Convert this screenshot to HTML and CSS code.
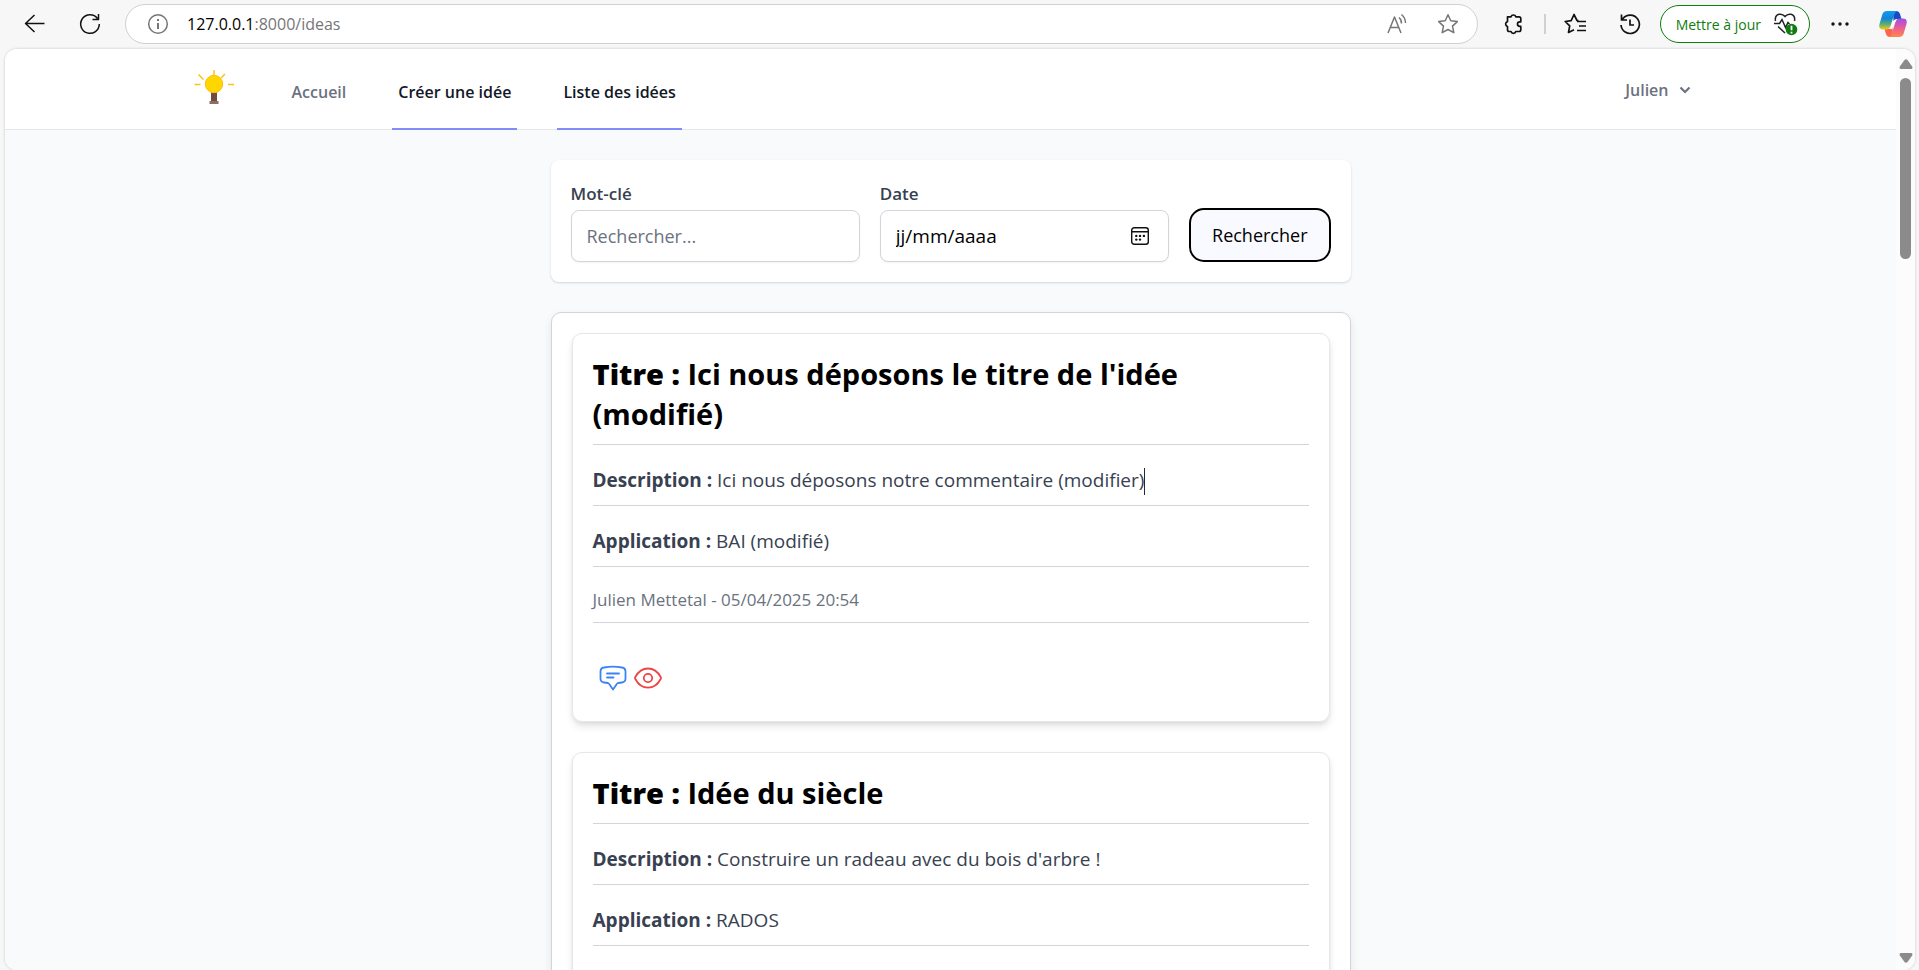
FILE: index.html
```html
<!DOCTYPE html>
<html lang="fr">
<head>
<meta charset="utf-8">
<title>Liste des idées</title>
<link rel="stylesheet" href="styles.css">
</head>
<body>
<div class="browser">
  <header class="toolbar">
    <button class="tool" type="button" aria-label="Retour">
      <svg class="glyph" width="22" height="22" viewBox="0 0 22 22"><path d="M20.500 10.500H1.500M10.500 2L1.500 10.500l9 8.500"/></svg>
    </button>
    <button class="tool" type="button" aria-label="Actualiser">
      <svg class="glyph" width="22" height="22" viewBox="0 0 22 22"><path d="M20.300 11A9.300 9.300 0 1 1 18.500 5.500M19.500 1v5.500h-6"/></svg>
    </button>
    <div class="address">
      <svg class="glyph grey" width="22" height="22" viewBox="0 0 22 22"><circle cx="11" cy="11" r="9.300"/><path d="M11 10v6M11 6v2" stroke-width="2"/></svg>
      <span class="url"><b class="host">127.0.0.1</b>:8000/ideas</span>
      <button class="tool" type="button" aria-label="Lecture à voix haute">
        <svg class="glyph grey" width="24" height="24" viewBox="0 0 24 24"><path d="M3 21L9.500 5 16 21M5.200 15.500h8.600M14 5.500q2.500 2 2.500 6M16.500 2.500q4 3.500 4 8.500"/></svg>
      </button>
      <button class="tool" type="button" aria-label="Favori">
        <svg class="glyph grey" width="22" height="22" viewBox="0 0 22 22"><path d="M11 1.800l2.800 6 6.500.8-4.800 4.500 1.300 6.600L11 16.500l-5.800 3.200 1.300-6.600L1.700 8.600l6.500-.8z"/></svg>
      </button>
    </div>
    <div class="tools">
      <button class="tool" type="button" aria-label="Extensions">
        <svg class="glyph thick" width="22" height="22" viewBox="0 0 22 22"><path d="M4.500 3.800H8a2.500 2.500 0 0 1 4.800 0H16q1.800 0 1.800 1.700v3.300h-1a2.300 2.300 0 0 0 0 4.600h1v3.400q0 1.700-1.800 1.700h-3.200a2.500 2.500 0 0 1-4.800 0H6.300q-1.800 0-1.800-1.700v-3.200a2.600 2.600 0 0 1 0-5z"/></svg>
      </button>
      <span class="rule"></span>
      <button class="tool" type="button" aria-label="Favoris">
        <svg class="glyph thick" width="24" height="22" viewBox="0 0 24 22"><path d="M14.500 7.500L13 7.500 10 1.500 7.200 7.700l-6 .8 4.500 4.300L4.500 19.500 10 16.700M13 8.500h9M15 13h7M13 17.500h9"/></svg>
      </button>
      <button class="tool" type="button" aria-label="Historique">
        <svg class="glyph thick" width="22" height="22" viewBox="0 0 22 22"><path d="M2 12A9.200 9.200 0 1 0 4 5.500L2.500 7M2.500 1.500V7H8M11 6.500V12h4"/></svg>
      </button>
      <button class="update" type="button">Mettre à jour
        <svg width="25" height="24" viewBox="0 0 25 24" fill="none" stroke="#222" stroke-width="1.500"><path d="M2.500 9Q1.500 3.500 6 2.300q3.500-.8 6 2.200 2.500-3 6-2.200 4.500 1.200 3.500 6.700M1 11.500h5.500L9 7.500l3.500 8 2.500-5 1.500 1.500M5 14.500l7 6.500"/><circle cx="18.500" cy="17.500" r="5.800" fill="#107c10" stroke="none"/><path d="M18.500 13.800v4.500M18.500 19.800v1.800" stroke="#fff" stroke-width="1.800"/></svg>
      </button>
      <button class="tool" type="button" aria-label="Paramètres">
        <svg width="20" height="20" viewBox="0 0 20 20" fill="#111"><circle cx="3" cy="10" r="1.700"/><circle cx="10" cy="10" r="1.700"/><circle cx="17" cy="10" r="1.700"/></svg>
      </button>
      <button class="tool copilot" type="button" aria-label="Copilot">
        <svg width="28" height="28" viewBox="0 0 28 28">
          <defs>
            <linearGradient id="cool" x1="0" y1="0" x2="0" y2="1"><stop offset="0" stop-color="#0f9cf0"/><stop offset=".4" stop-color="#1483d8"/><stop offset=".7" stop-color="#55ae78"/><stop offset="1" stop-color="#f5c916"/></linearGradient>
            <linearGradient id="warm" x1="0" y1="0" x2="0" y2="1"><stop offset="0" stop-color="#9a50e8"/><stop offset=".5" stop-color="#eb5b98"/><stop offset="1" stop-color="#ff8748"/></linearGradient>
          </defs>
          <path fill="#174bc5" d="M14 1h3q3 0 4 3l1.500 5h-5q-2 0-3 2z"/>
          <path fill="#fb6550" d="M14 27h-3q-3 0-4-3l-1.500-5h5q2 0 3-2z"/>
          <path fill="url(#cool)" d="M8 1h10q-2 1-3 4l-3.500 11q-1 3.500-4 3.500H4Q-.8 19.500.5 14L3.500 4Q4.500 1 8 1z"/>
          <path fill="url(#warm)" d="M20 27H10q2-1 3-4l3.500-11q1-3.500 4-3.500H24q4.800 0 3.500 5.500l-3 10q-1 3-4.500 3z"/>
          <path fill="#fff" d="M15.500 10h2q-1.500 1-2.300 3.500L13 19h-2q1.200-1 2-3.500z"/>
        </svg>
      </button>
    </div>
  </header>

  <div class="viewport">
    <div class="page">
      <nav class="nav">
        <div class="nav-inner">
          <a class="logo" href="#" aria-label="Accueil">
            <svg width="40" height="36" viewBox="0 0 40 36"><g stroke="#fcc419" stroke-width="1.500"><path d="M20 0v6M4.500 4.500l5 5M31 4l-4 4M.500 14.500h6M34 14.500h6"/></g><path fill="#6d4c41" d="M17 22h6v9h-6z"/><path fill="#8d6e63" d="M15.500 31h9v3h-9z"/><circle cx="20" cy="14" r="8.700" fill="#ffd600" stroke="#fcc010"/></svg>
          </a>
          <a class="link muted" href="#">Accueil</a>
          <a class="link active" href="#">Créer une idée</a>
          <a class="link active" href="#">Liste des idées</a>
          <button class="user" type="button">Julien
            <svg width="12" height="8" viewBox="0 0 12 8" fill="none" stroke="#6b7280" stroke-width="2.200"><path d="M1.500 1.500L6 6l4.500-4.500"/></svg>
          </button>
        </div>
      </nav>

      <main class="content">
        <form class="search">
          <div class="field">
            <label for="keyword">Mot-clé</label>
            <input class="box" id="keyword" type="text" placeholder="Rechercher...">
          </div>
          <div class="field">
            <label for="date">Date</label>
            <div class="box date">
              <input id="date" type="text" placeholder="jj/mm/aaaa">
              <button class="tool" type="button" aria-label="Ouvrir le calendrier">
                <svg width="18" height="18" viewBox="0 0 18 18" fill="none" stroke="#111" stroke-width="1.400"><rect x=".7" y=".7" width="16.600" height="16.600" rx="2.500"/><path d="M1 4.700h16"/><g fill="#111" stroke="none"><circle cx="5.300" cy="12.600" r="1.200"/><circle cx="9" cy="12.600" r="1.200"/><circle cx="5.300" cy="8.900" r="1.200"/><circle cx="9" cy="8.900" r="1.200"/><circle cx="12.900" cy="8.900" r="1.200"/></g></svg>
              </button>
            </div>
          </div>
          <button class="submit" type="submit">Rechercher</button>
        </form>

        <section class="list">
          <article class="idea">
            <h2 class="title"><strong>Titre :</strong> Ici nous déposons le titre de l'idée (modifié)</h2>
            <p class="row"><strong>Description :</strong> Ici nous déposons notre commentaire (modifier)<span class="caret"></span></p>
            <p class="row"><strong>Application :</strong> BAI (modifié)</p>
            <p class="row meta">Julien Mettetal - 05/04/2025 20:54</p>
            <div class="actions">
              <a href="#" class="comment" aria-label="Commenter"><svg width="28" height="26" viewBox="0 0 28 26"><path d="M5 2.500q9-1.600 18 0 3.500.5 3.500 4v7q0 3.500-3.500 4l-4 .5q-1 .3-1.500 1.500L14 24.500 10.500 19.500Q10 18.300 9 18l-4-.5q-3.500-.5-3.500-4v-7q0-3.500 3.500-4zM8 8.500h12M8 12.500h6.500"/></svg></a>
              <a href="#" class="view" aria-label="Voir"><svg width="28" height="26" viewBox="0 0 28 26"><path d="M1.300 14Q.7 13 1.300 12 6 3.500 14 3.500T26.700 12q.6 1 0 2Q22 22.700 14 22.700T1.300 14z"/><circle cx="14" cy="13" r="4.200"/></svg></a>
            </div>
          </article>
          <article class="idea">
            <h2 class="title"><strong>Titre :</strong> Idée du siècle</h2>
            <p class="row"><strong>Description :</strong> Construire un radeau avec du bois d'arbre !</p>
            <p class="row"><strong>Application :</strong> RADOS</p>
            <div class="actions"></div>
          </article>
        </section>
      </main>
    </div>
    <div class="scrollbar">
      <svg width="14" height="10" viewBox="0 0 14 10" fill="#8b8b8b"><path d="M5.500 1q1.500-1.500 3 0l4.700 6.500Q14 10 12 10H2Q0 10 .8 7.500z"/></svg>
      <span class="thumb"></span>
      <svg width="14" height="10" viewBox="0 0 14 10" fill="#8b8b8b"><path d="M5.500 9q1.500 1.500 3 0l4.700-6.500Q14 0 12 0H2Q0 0 .8 2.500z"/></svg>
    </div>
  </div>
</div>
</body>
</html>
```

FILE: styles.css
```css
* { box-sizing: border-box; }

body {
  margin: 0;
  background: #f7f7f7;
  color: #000;
  font-family: "Open Sans", "Noto Sans", sans-serif;
  font-size: 18px;
}

button, input { font: inherit; color: inherit; }
h2, p { margin: 0; }
svg { display: block; flex: none; }

.browser {
  display: flex;
  flex-direction: column;
  height: 100vh;
  overflow: hidden;
}

/* Browser toolbar */
.toolbar {
  display: flex;
  align-items: center;
  height: 48px;
  padding: 0 12px 0 24px;
  gap: 33px;
}
.tool {
  display: flex;
  padding: 0;
  border: 0;
  background: none;
}
.glyph {
  fill: none;
  stroke: #111;
  stroke-width: 1.5;
  stroke-linejoin: round;
}
.glyph.grey { stroke: #767676; }
.glyph.thick { stroke-width: 1.7; }
.address {
  display: flex;
  flex: 1;
  align-items: center;
  height: 40px;
  margin-left: -9px;
  padding: 0 18px 0 21px;
  gap: 28px;
  border: 1px solid #d0d0d0;
  border-radius: 20px;
  background: #fff;
}
.url {
  flex: 1;
  margin-left: -10px;
  color: #767676;
  font-size: 16px;
}
.host { color: #000; font-weight: 400; }
.tools {
  display: flex;
  align-items: center;
  margin-left: -8px;
}
.tools > * + * { margin-left: 19px; }
.rule { width: 2px; height: 20px; background: #d0d0d0; }
.tools .rule + .tool { margin-left: 18px; }
.tools .tool + .tool { margin-left: 31px; }
.tools .update {
  display: flex;
  align-items: center;
  gap: 12px;
  height: 38px;
  padding: 0 11px 0 15px;
  border: 1px solid #107c10;
  border-radius: 19px;
  background: #fff;
  color: #107c10;
  font-size: 14px;
}
.tools .update + .tool { margin-left: 20px; }
.tools .copilot.tool { margin-left: 29px; }

/* Web page area */
.viewport {
  display: flex;
  flex: 1;
  min-height: 0;
  margin: 1px 4px 0 5px;
  overflow: hidden;
  border-radius: 12px;
  background: #fff;
  box-shadow: 0 0 3px #0003;
}
.page {
  flex: 1;
  overflow: hidden;
  background: #f9fafb;
}
.scrollbar {
  display: flex;
  flex-direction: column;
  align-items: center;
  width: 19px;
  padding: 10px 0 7px;
  background: #fcfcfc;
}
.thumb {
  width: 11px;
  height: 181px;
  margin: 9px 0 auto;
  border-radius: 6px;
  background: #8b8b8b;
}

/* Navigation */
.nav {
  border-bottom: 1px solid #e5e7eb;
  background: #fff;
}
.nav-inner {
  display: flex;
  align-items: stretch;
  max-width: 1600px;
  height: 81px;
  margin: 0 auto -1px;
  padding: 0 40px;
  gap: 40px;
}
.logo { padding: 21px 12px 0 3px; }
.link {
  display: flex;
  align-items: center;
  padding: 6px 6px 0;
  border-bottom: 2px solid transparent;
  color: #111827;
  font-size: 16px;
  font-weight: 600;
  text-decoration: none;
}
.link.muted { color: #6b7280; }
.link.active { border-color: #818cf8; }
.user {
  display: flex;
  align-items: center;
  gap: 10px;
  margin-left: auto;
  padding: 0 20px 0 0;
  border: 0;
  background: none;
  color: #6b7280;
  font-size: 16px;
  font-weight: 600;
}

/* Search form */
.content {
  max-width: 800px;
  margin: 0 auto;
  padding-top: 30px;
}
.search {
  display: flex;
  align-items: flex-end;
  gap: 20px;
  padding: 20px;
  border-radius: 8px;
  background: #fff;
  box-shadow: 0 1px 3px #0000001a, 0 1px 2px #0000000f;
}
.field { flex: 1; min-width: 0; }
.field label {
  display: block;
  padding-bottom: 3px;
  color: #374151;
  font-size: 17px;
  font-weight: 600;
  line-height: 27px;
}
.box {
  display: block;
  width: 100%;
  height: 52px;
  padding: 0 15px;
  border: 1px solid #d1d5db;
  border-radius: 8px;
  background: #fff;
  box-shadow: 0 1px 2px #0000000d;
}
.box::placeholder { color: #6b7280; }
.date {
  display: flex;
  align-items: center;
  padding-right: 19px;
}
.date input {
  flex: 1;
  min-width: 0;
  padding: 0;
  border: 0;
  background: none;
  font-size: 19px;
}
.date input::placeholder { color: #000; opacity: 1; }
.submit {
  height: 54px;
  padding: 0 21px;
  border: 2px solid #000;
  border-radius: 15px;
  background: #f9faff;
}

/* Ideas */
.list {
  display: flex;
  flex-direction: column;
  gap: 30px;
  margin-top: 30px;
  padding: 20px;
  border: 1px solid #d1d5db;
  border-radius: 10px;
  background: #fff;
  box-shadow: 0 4px 8px #00000018;
}
.idea {
  padding: 20px;
  border: 1px solid #e5e7eb;
  border-radius: 10px;
  background: #fff;
  box-shadow: 0 5px 8px -1px #0000001c, 0 2px 5px -1px #00000012;
}
.title {
  padding-bottom: 10px;
  border-bottom: 1px solid #d1d5db;
  font-size: 29px;
  font-weight: 700;
  line-height: 40px;
}
.title strong { font-weight: 800; }
.row {
  margin-top: 20px;
  padding-bottom: 10px;
  border-bottom: 1px solid #d1d5db;
  color: #374151;
  font-size: 19px;
  line-height: 30px;
}
.meta {
  color: #6b7280;
  font-size: 17px;
  line-height: 25px;
}
.caret {
  display: inline-block;
  width: 1px;
  height: 27px;
  margin: -3px 0;
  background: #1f2937;
  vertical-align: middle;
}
.actions {
  display: flex;
  gap: 7px;
  min-height: 78px;
  padding: 42px 6px 10px;
}
.actions svg {
  fill: none;
  stroke-width: 1.8;
  stroke-linecap: round;
  stroke-linejoin: round;
}
.comment { stroke: #3b82f6; }
.view { stroke: #ef4444; }
```
